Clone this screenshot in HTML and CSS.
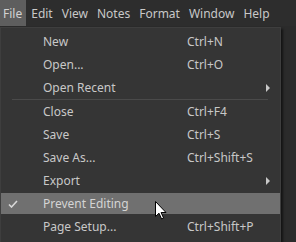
FILE: index.html
```html
<!DOCTYPE html>
<html lang="en">
<head>
    <meta charset="UTF-8">
    <title>File menu</title>
    <link rel="stylesheet" href="styles.css">
</head>
<body>
    <div class="menubar">
        <span class="menubar-item active">File</span>
        <span class="menubar-item">Edit</span>
        <span class="menubar-item">View</span>
        <span class="menubar-item">Notes</span>
        <span class="menubar-item">Format</span>
        <span class="menubar-item">Window</span>
        <span class="menubar-item">Help</span>
    </div>

    <div class="menu">
        <div class="item"><span class="check"></span><span class="label">New</span><span class="key">Ctrl+N</span></div>
        <div class="item"><span class="check"></span><span class="label">Open...</span><span class="key">Ctrl+O</span></div>
        <div class="item"><span class="check"></span><span class="label">Open Recent</span><span class="key"></span><span class="arrow"></span></div>
        <div class="separator"></div>
        <div class="item"><span class="check"></span><span class="label">Close</span><span class="key">Ctrl+F4</span></div>
        <div class="item"><span class="check"></span><span class="label">Save</span><span class="key">Ctrl+S</span></div>
        <div class="item"><span class="check"></span><span class="label">Save As...</span><span class="key">Ctrl+Shift+S</span></div>
        <div class="item"><span class="check"></span><span class="label">Export</span><span class="key"></span><span class="arrow"></span></div>
        <div class="item hover">
            <span class="check">
                <svg width="10" height="8" viewBox="0 0 10 8"><path d="M1 4.5 L3.5 7 L9 1" fill="none" stroke="#d8d8d8" stroke-width="1.6"/></svg>
            </span>
            <span class="label">Prevent Editing</span><span class="key"></span>
            <svg class="cursor" width="12" height="19" viewBox="0 0 12 19"><path d="M0.5 0.5 L0.5 15.5 L4 12.2 L6.6 18 L8.6 17.1 L6.1 11.5 L11 11.5 Z" fill="#fff" stroke="#000" stroke-width="1"/></svg>
        </div>
        <div class="item"><span class="check"></span><span class="label">Page Setup...</span><span class="key">Ctrl+Shift+P</span></div>
    </div>
</body>
</html>
```

FILE: styles.css
```css
body {
    margin: 0;
    background-color: #2b2b2b;
    font-family: "Noto Sans", "Open Sans", sans-serif;
    font-size: 12px;
    color: #c8c8c8;
    overflow: hidden;
}
.menubar {
    display: flex;
    height: 26px;
    background-color: #2d2d2d;
}
.menubar-item {
    display: flex;
    align-items: center;
    padding: 0 4px 0 3px;
    margin-right: 2px;
}
.menubar-item.active {
    background-color: #5e5e5e;
    color: #d2d2d2;
}
.menu {
    display: flex;
    flex-direction: column;
    box-sizing: border-box;
    width: 281px;
    height: 215px;
    margin-top: 1px;
    padding-top: 2px;
    background-color: #353535;
    border: 1px solid #3e3e3e;
    border-bottom: none;
    box-shadow: 2px 2px 2px rgba(0, 0, 0, 0.55);
}
.item {
    position: relative;
    display: flex;
    align-items: center;
    height: 21px;
    margin: 1px 0;
}
.item.hover {
    background-color: #707070;
    color: #d4d4d4;
}
.check {
    display: flex;
    align-items: center;
    width: 42px;
    padding-left: 7px;
    box-sizing: border-box;
}
.label {
    width: 144px;
}
.key {
    flex: 1;
}
.arrow {
    width: 0;
    height: 0;
    border-top: 4px solid transparent;
    border-bottom: 4px solid transparent;
    border-left: 4px solid #c8c8c8;
    margin-right: 10px;
}
.separator {
    height: 1px;
    margin: 0 12px 0 11px;
    background-color: #4a4a4a;
}
.cursor {
    position: absolute;
    left: 154px;
    top: 8px;
}
```
